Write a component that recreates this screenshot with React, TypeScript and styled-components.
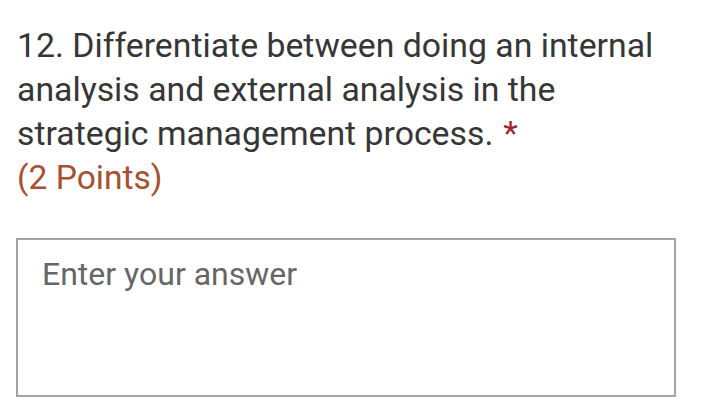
import React from "react";
import styled, { createGlobalStyle } from "styled-components";

const Global = createGlobalStyle`
  html, body { margin: 0; padding: 0; background: #ffffff; }
  body { font-family: Roboto, "Noto Sans", Arial, sans-serif; }
`;

const Page = styled.div`
  width: 706px;
  height: 417px;
  box-sizing: border-box;
  padding: 24px 30px 0 17px;
  display: flex;
  flex-direction: column;
`;

const Question = styled.div`
  font-size: 33.8px;
  line-height: 44px;
  color: #363636;
`;

const Required = styled.span`
  color: #a4262c;
  margin-left: 10px;
`;

const Points = styled.div`
  font-size: 33.6px;
  line-height: 44px;
  color: #a8502f;
`;

const AnswerBox = styled.div`
  margin-top: 38px;
  margin-left: -1px;
  width: 660px;
  height: 159px;
  box-sizing: border-box;
  border: 2px solid #a3a3a3;
  padding: 16px 24px;
`;

const Placeholder = styled.div`
  font-size: 32px;
  line-height: 36px;
  color: #666666;
`;

export default function App() {
  return (
    <>
      <Global />
      <Page>
        <Question>
          12. Differentiate between doing an internal analysis and external
          analysis in the strategic management process.
          <Required>*</Required>
        </Question>
        <Points>(2 Points)</Points>
        <AnswerBox>
          <Placeholder>Enter your answer</Placeholder>
        </AnswerBox>
      </Page>
    </>
  );
}
